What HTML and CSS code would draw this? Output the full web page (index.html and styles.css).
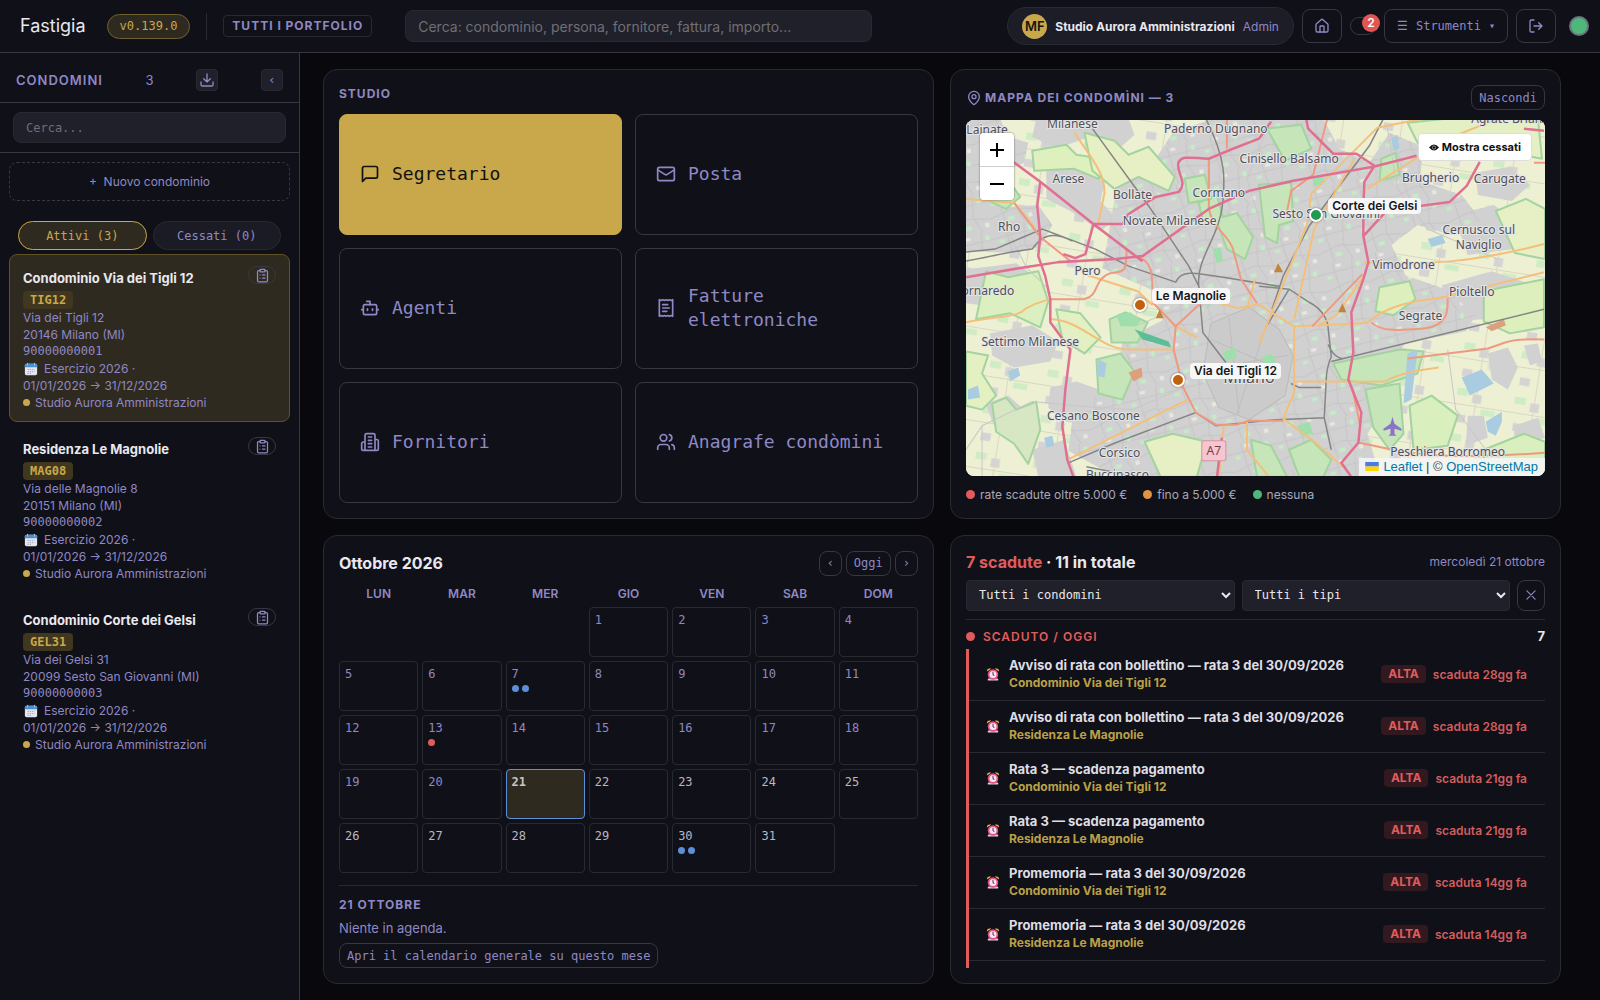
FILE: index.html
```
<!DOCTYPE html>
<html lang="it">
<head>
<meta charset="utf-8">
<meta name="viewport" content="width=device-width, initial-scale=1">
<title>Fastigia</title>
<link rel="stylesheet" href="styles.css">
</head>
<body>
<svg class="defs" aria-hidden="true">
  <symbol id="i-download" viewBox="0 0 24 24"><path d="M12 3v12M7 10l5 5 5-5M3 15v4a2 2 0 0 0 2 2h14a2 2 0 0 0 2-2v-4"/></symbol>
  <symbol id="i-home" viewBox="0 0 24 24"><path d="M15 21v-8a1 1 0 0 0-1-1h-4a1 1 0 0 0-1 1v8"/><path d="M3 10a2 2 0 0 1 .7-1.5l7-6a2 2 0 0 1 2.6 0l7 6A2 2 0 0 1 21 10v9a2 2 0 0 1-2 2H5a2 2 0 0 1-2-2z"/></symbol>
  <symbol id="i-logout" viewBox="0 0 24 24"><path d="M9 21H5a2 2 0 0 1-2-2V5a2 2 0 0 1 2-2h4M16 17l5-5-5-5M21 12H9"/></symbol>
  <symbol id="i-clip" viewBox="0 0 24 24"><rect x="8" y="2" width="8" height="4" rx="1"/><path d="M16 4h2a2 2 0 0 1 2 2v14a2 2 0 0 1-2 2H6a2 2 0 0 1-2-2V6a2 2 0 0 1 2-2h2M12 11h4M12 16h4M8 11h.01M8 16h.01"/></symbol>
  <symbol id="i-chat" viewBox="0 0 24 24"><path d="M21 15a2 2 0 0 1-2 2H7l-4 4V5a2 2 0 0 1 2-2h14a2 2 0 0 1 2 2z"/></symbol>
  <symbol id="i-mail" viewBox="0 0 24 24"><rect x="2" y="4" width="20" height="16" rx="2"/><path d="m22 7-9 5.700a2 2 0 0 1-2 0L2 7"/></symbol>
  <symbol id="i-bot" viewBox="0 0 24 24"><path d="M12 8V4H8"/><rect x="4" y="8" width="16" height="12" rx="2"/><path d="M2 14h2M20 14h2M15 13v2M9 13v2"/></symbol>
  <symbol id="i-receipt" viewBox="0 0 24 24"><path d="M4 2v20l2-1 2 1 2-1 2 1 2-1 2 1 2-1 2 1V2l-2 1-2-1-2 1-2-1-2 1-2-1-2 1ZM14 8H8M16 12H8M13 16H8"/></symbol>
  <symbol id="i-building" viewBox="0 0 24 24"><path d="M6 22V4a2 2 0 0 1 2-2h8a2 2 0 0 1 2 2v18ZM6 12H4a2 2 0 0 0-2 2v6a2 2 0 0 0 2 2h2M18 9h2a2 2 0 0 1 2 2v9a2 2 0 0 1-2 2h-2M10 6h4M10 10h4M10 14h4M10 18h4"/></symbol>
  <symbol id="i-users" viewBox="0 0 24 24"><path d="M16 21v-2a4 4 0 0 0-4-4H6a4 4 0 0 0-4 4v2"/><circle cx="9" cy="7" r="4"/><path d="M22 21v-2a4 4 0 0 0-3-3.870M16 3.130a4 4 0 0 1 0 7.750"/></symbol>
  <symbol id="i-pin" viewBox="0 0 24 24"><path d="M20 10c0 5-5.500 10.200-7.400 11.800a1 1 0 0 1-1.200 0C9.500 20.200 4 15 4 10a8 8 0 0 1 16 0"/><circle cx="12" cy="10" r="3"/></symbol>
  <symbol id="i-x" viewBox="0 0 24 24"><path d="M19 5 5 19M5 5l14 14"/></symbol>
  <symbol id="i-cal" viewBox="0 0 16 16"><rect x="1" y="2" width="14" height="13" rx="2" fill="#e4e6f0"/><path d="M1 6V4a2 2 0 0 1 2-2h10a2 2 0 0 1 2 2v2z" fill="#4a90d0"/><path d="M4 1v3M12 1v3" stroke="#a8c8e8"/><path d="M4 8.500h8M4 11h8M4 13h5" stroke="#9aa0b8" stroke-dasharray="1.500 1"/></symbol>
  <symbol id="i-alarm" viewBox="0 0 16 16"><path d="M1 5c0-3 2-4 5-3zM15 5c0-3-2-4-5-3z" fill="#e9b44c"/><rect x="2" y="13" width="12" height="2.500" rx="1" fill="#e8c9e0"/><circle cx="8" cy="8.500" r="6" fill="#e8507f"/><circle cx="8" cy="8.500" r="4" fill="#f6e6f2"/><path d="M8 5.500v3l1.500 1.500" stroke="#54405c" stroke-width="1.200" fill="none"/></symbol>
</svg>

<div class="app">
<header class="topbar">
  <div class="brand">Fastigia</div>
  <span class="version">v0.139.0</span>
  <span class="divider"></span>
  <span class="portfolio">TUTTI I PORTFOLIO</span>
  <input class="search" type="search" aria-label="Cerca" placeholder="Cerca: condominio, persona, fornitore, fattura, importo...">
  <div class="actions">
    <div class="user"><span class="avatar">MF</span><strong>Studio Aurora Amministrazioni</strong><span>Admin</span></div>
    <button class="btn tool" aria-label="Home"><svg class="ico"><use href="#i-home"/></svg></button>
    <button class="toggle" aria-label="Notifiche"><span class="count">2</span></button>
    <button class="btn menu"><span>☰</span> Strumenti <small>▾</small></button>
    <button class="btn tool" aria-label="Esci"><svg class="ico"><use href="#i-logout"/></svg></button>
    <span class="status"></span>
  </div>
</header>

<div class="body">
<aside class="side">
  <div class="side-head">
    <h2>CONDOMINI</h2><span class="n">3</span>
    <button class="sq" aria-label="Esporta"><svg class="ico"><use href="#i-download"/></svg></button>
    <button class="sq" aria-label="Comprimi">‹</button>
  </div>
  <div class="side-search"><input type="text" aria-label="Cerca condominio" placeholder="Cerca..."></div>
  <div class="side-list">
    <button class="new">+&nbsp; Nuovo condominio</button>
    <div class="tabs"><button class="tab on">Attivi (3)</button><button class="tab">Cessati (0)</button></div>
    <article class="condo on">
      <div class="condo-top"><h3>Condominio Via dei Tigli 12</h3><button class="clip" aria-label="Scheda"><svg class="ico"><use href="#i-clip"/></svg></button></div>
      <span class="code">TIG12</span>
      <p>Via dei Tigli 12</p><p>20146 Milano (MI)</p><p class="mono">90000000001</p>
      <p class="year"><svg class="emo"><use href="#i-cal"/></svg> Esercizio 2026 ·</p><p>01/01/2026 → 31/12/2026</p>
      <p class="owner"><i></i>Studio Aurora Amministrazioni</p>
    </article>
    <article class="condo">
      <div class="condo-top"><h3>Residenza Le Magnolie</h3><button class="clip" aria-label="Scheda"><svg class="ico"><use href="#i-clip"/></svg></button></div>
      <span class="code">MAG08</span>
      <p>Via delle Magnolie 8</p><p>20151 Milano (MI)</p><p class="mono">90000000002</p>
      <p class="year"><svg class="emo"><use href="#i-cal"/></svg> Esercizio 2026 ·</p><p>01/01/2026 → 31/12/2026</p>
      <p class="owner"><i></i>Studio Aurora Amministrazioni</p>
    </article>
    <article class="condo">
      <div class="condo-top"><h3>Condominio Corte dei Gelsi</h3><button class="clip" aria-label="Scheda"><svg class="ico"><use href="#i-clip"/></svg></button></div>
      <span class="code">GEL31</span>
      <p>Via dei Gelsi 31</p><p>20099 Sesto San Giovanni (MI)</p><p class="mono">90000000003</p>
      <p class="year"><svg class="emo"><use href="#i-cal"/></svg> Esercizio 2026 ·</p><p>01/01/2026 → 31/12/2026</p>
      <p class="owner"><i></i>Studio Aurora Amministrazioni</p>
    </article>
  </div>
</aside>

<main class="main">
  <section class="panel studio">
    <h2 class="label">STUDIO</h2>
    <div class="tiles">
      <button class="tile on"><svg class="ico"><use href="#i-chat"/></svg>Segretario</button>
      <button class="tile"><svg class="ico"><use href="#i-mail"/></svg>Posta</button>
      <button class="tile"><svg class="ico"><use href="#i-bot"/></svg>Agenti</button>
      <button class="tile"><svg class="ico"><use href="#i-receipt"/></svg>Fatture elettroniche</button>
      <button class="tile"><svg class="ico"><use href="#i-building"/></svg>Fornitori</button>
      <button class="tile"><svg class="ico"><use href="#i-users"/></svg>Anagrafe condòmini</button>
    </div>
  </section>

  <section class="panel mapbox">
    <div class="row"><h2 class="label wide"><svg class="ico"><use href="#i-pin"/></svg>MAPPA DEI CONDOMÌNI — 3</h2><button class="btn sm">Nascondi</button></div>
    <div class="map">
      <svg class="tiles-bg" viewBox="0 0 577 357" preserveAspectRatio="xMidYMid slice" aria-hidden="true">
        <defs>
          <pattern id="streets" width="44" height="38" patternUnits="userSpaceOnUse" patternTransform="rotate(-14)">
            <path d="M0 9h44M0 27l22-5 22 5M11 0l3 38M31 0l-4 22 6 16" fill="none" stroke="#c6c5c6" stroke-width="1"/>
            <path d="M3 12h5v3H3zM17 29h6v4h-6zM34 4h4v5h-4z" fill="#c4ecc6"/>
            <path d="M37 30h4v4h-4zM14 2h5v3h-5z" fill="#e8e8df"/>
          </pattern>
          <pattern id="fields" width="58" height="46" patternUnits="userSpaceOnUse" patternTransform="rotate(9)">
            <path d="M4 4h11v7H4zM30 22h14v6H30z" fill="#cfecc4"/><path d="M20 8h9v9h-9zM6 30h10v8H6z" fill="#d5d3d3"/><path d="M0 20h58M24 0v46" stroke="#d9d6c4" fill="none"/>
          </pattern>
        </defs>
        <rect width="577" height="357" fill="#eef0d4"/>
        <rect width="577" height="357" fill="url(#fields)"/>
        <g fill="#d2d1d2">
          <path d="M0 0h34l8 18 20 6-4 20-22 10-8 22 14 12 30-2 14 20-12 22-30 6-44-2z"/>
          <path d="M70 0h92l6 16-20 18-30-14-28 10-24-12zM80 52l36-8 22 20-4 18 16 18-16 12-30-20-24-12z"/>
          <path d="M0 150l50-6 20 14-12 22-26 8-32-4zM24 214l42-8 26 16-8 20-36 6-22-12zM20 284l22-8 16 14 4 24-20 6-16-18zM66 330l32-10 12 37H72z"/>
          <path d="M150 70l30-16 26-40 40-14h110l16 30 30 14 20-30 34 14-4 34 42 14 20 26-30 14-34-10-26 20 14 30 40 14 30 26-10 16-60 12-24 30 6 30-20 30 12 40-6 23H232l-10-30-40 14-40-8-40-22 4-30 24-26 20-18 6-36 40-20-10-30-50-22z"/>
          <path d="M486 96l40-10 26 20-6 24-46 6zM474 166l50-14 36 12 16 20-30 14-60 4zM508 54l34-6 20 18-18 16-34-6zM520 234l20-6 10 20-10 22-16-10zM556 226l14-2 4 18-12 4zM500 296h16l4 22-22 8zM546 306l24-8 7 20-30 10zM360 300l30 12 20 44h-50z"/>
          <path d="M84 268l26-6 34 12 24 18-22 16-46-6-18-14z"/>
        </g>
        <path d="M0 0h34l8 18 20 6-4 20-22 10-8 22 14 12 30-2 14 20-12 22-30 6-44-2zM150 70l30-16 26-40 40-14h110l16 30 30 14 20-30 34 14-4 34 42 14 20 26-30 14-34-10-26 20 14 30 40 14 30 26-10 16-60 12-24 30 6 30-20 30 12 40-6 23H232l-10-30-40 14-40-8-40-22 4-30 24-26 20-18 6-36 40-20-10-30-50-22z" fill="url(#streets)"/>
        <path d="M244 204l38-16 30 22 14 26-8 40-36 24-30-12-16-34z" fill="#cccbcc" stroke="#bbb"/>
        <path d="M244 220l70 30M262 198l10 96M300 204l-30 90M236 250l84-14" stroke="#bebdbe" fill="none"/>
        <g fill="#c6e6ba" stroke="#a3d39f" stroke-width="2" stroke-linejoin="round">
          <path d="M66 32l34-6 10 10 26 4-4 20-24-10-40 2z" fill="#dff0bf"/>
          <path d="M118 14l30 8 14 14 20-8 26 30-6 14-30-14-24 12-22-18z" fill="#e6f0c4"/>
          <path d="M232 84l18-8 6 22 14-4 16 24-8 22-18-10-8-22-16-6zM218 60l20-4 6 24-22 4z"/>
          <path d="M292 66l32-2 2 38-14 4-2 18-12-6z"/>
          <path d="M300 10l34-4 10 24-26 12zM20 62l20-4 14 20-14 12-22-10z"/>
          <path d="M143 200l16-7 22 10-10 20-26 0z"/><path d="M20 152l22 6 30-6 10 30-8 26-30-14-34 6z" fill="#dcefc0"/>
          <path d="M130 240l24-6 14 18-12 28-24-6z"/><path d="M90 190l24 4 20 24-16 16-22-14zM0 232l22 4-6 18 14 22-14 14-16-4z" fill="#e2f0c2"/>
          <path d="M26 284l14-6 10 12 20-8 4 28-12 34-14-20-18-12z" fill="#d7e6c3"/>
          <path d="M178 322l28-8 34 8-10 35h-36z" fill="#e6f0c4"/><path d="M284 320l20 6 16 31h-30zM322 330l22-10 20 20-8 17h-24z"/>
          <path d="M366 244l66-14 24 2-6 22-36 12-40-6z"/><path d="M398 270l34-6 4 50-14 16-16-22z"/>
          <path d="M412 168l30-6 6 18-22 16-18-4zM516 172l60-12v48l-34 6-26-12z" fill="#dcefbd"/>
          <path d="M440 4l40-4h90l4 40-30-6-20-18-44 12-30-4z" fill="#e4f0c4"/><path d="M414 40l14-6 4 22-20 6z"/>
          <path d="M442 286l22-10 26 20-10 30-34 4zM516 330l40-16 21 8v30l-60 0z" fill="#d9efbd"/><path d="M528 92l30-12 19 10v50l-30-6z" fill="#e6f0c4"/>
        </g>
        <g fill="#9fdfad"><path d="M150 196l14-3 10 8-4 6-16 0z"/><path d="M168 210l34 12 2 6-28-8z" fill="#5fbd95"/><path d="M256 232l12-4 2 10-12 4zM346 60l10-4 2 8-12 4zM236 176l12 4-6 8z"/><path d="M294 238l10-4 6 10-8 8zM330 306l12-4 4 12-12 2zM246 130l8-2 2 14-6 2z"/></g>
        <g fill="#a9cce0"><path d="M132 240l8 4-2 14-8-2zM42 252l10-4 2 8-10 6zM2 270l10-4 2 12-12 2zM78 318l8-2 2 10-8 2zM494 258l20-8 12 14-24 12zM518 302l16-10 0 10-6 14-8-4zM440 234l10-4-6 50-8 4zM460 120l14-4 4 8-14 4zM424 20l6-4 2 14-6 2zM500 18l10 0 0 8-10-2z"/></g>
        <g fill="#dda07c"><path d="M162 253l13-5 1 9-9 5zM518 208l18-8 2 6-14 6z"/></g>
        <g fill="none" stroke="#c9c7c8"><path d="M0 330l16-24 50-24 40 4 60 4 46-20M16 306v51M40 108l20 40 20 20M420 10l10 60 30 40 70 30M480 230l8 60 30 40M300 10l-20 50 30 100M250 150l-40 40-40 16"/></g>
        <g fill="none" stroke="#858585" stroke-width="1.500"><path d="M126 10L182 87 222 147 232 167 236 213 259 243M0 133l29-3 47-20 53 20 33 17 47 16c8-16 20-8 103 4M0 142c50-10 50-10 66-12 10-14 20-18 40-8M416 0L402 27 342 107 316 157 305 190M239 0c20 40 20 60 16 90s-26 50-23 77M292 167l30 3 20 13c16 8 19 22 19 27l3 27c-4 10-5 20-5 23l-2 38 7 32M364 242L576 190M322 170l-22 36M361 225c4 10 10 14 14 14M102 343l47-20 80-30 20 13 60-6 48-2M354 268h-22l-8-4M170 357l-50-10"/></g>
        <g fill="none" stroke="#f3c07c" stroke-width="2"><path d="M0 80l48 4 20 24M108 14c20 30 30 40 30 60l-6 30M0 203c40-8 50-4 60-14 14-8 30-10 24-9M84 200c30 0 50 30 77 30h46M121 156l50 16 15 14M101 340l60-30 62-31M186 183l23 24 21 11M327 207v66l-11 26M327 207l-36-22-20 4-28-8M327 207c40-2 66-2 73-4 30-24 60-20 88-28l88-22M292 225l48-120 4-30 66-66 50-10M396 143c60 4 110 0 180-18M327 262h90c20-10 30-10 54-14M316 299l30 22 30 26M288 160l-8 30M327 200l20-90 40-70M350 207l20-12 28-40M280 300v30l22 27M257 305l-5 52M530 0l-50 20-80 50"/></g>
        <g fill="none" stroke="#ee9a80" stroke-width="2"><path d="M84 180h34c16-4 8-20 26-26 14-2 16 0 16-24M48 84l26 34 30 24M169 137c18 4 17 20 17 46l23 24-2 23 9 37 13 26 20 12h20l13-4 34 0M209 207l27-25M242 40l0 50c4 20 20 26 24 40l8 30 16 24M345 207l50-52M404 203c10 10 30 8 54 6 24-4 22-20 22-30M440 239l80-10c20-6 20-10 56-9M381 260c6 10 10 40 12 46M391 323c30 4 50 20 186 10M360 0l-14 56-22 16-4 20M566 44h11M260 0v30"/></g>
        <g fill="none" stroke="#e07090" stroke-width="2.500" stroke-linejoin="round"><path d="M47 43L74 63 127 105 169 137 176 142M74 63l-3 24 3 30-2 20 7 20 5 23v23l20 27-5 40-3 37 5 33 6 17M0 158l59-10 33-5 57-3 27-3 66-47 40-18 44-10 80-14 43-11M127 105l-8 30-10 4-12-4M127 105l29 0 6-10 27-17 23-5c10-10-4-20 0-30 4-6 10-4 30-3l24-10 26-10 12-17M339 0l2 10 25 25h23l18 12-10 16-1 24v30l5 26-5 17-12 33 2 40-5 27 13 33-3 30-17 20 10 14M512 43l-13 24-17 16-30 4-32 4-24 26M576 12l-20-2M255 318l-5 40"/></g>
        <g fill="#c2843c"><path d="M193 190l4 9h-8zM375 184l4 9h-8zM311 144l5 9h-9z"/></g>
        <path d="M425 297l2 7 7 5v2l-7-2v5l2 2h-8l2-2v-5l-7 2v-2l7-5z" fill="#8b74c8"/>
        <rect x="235" y="321" width="24" height="20" rx="2" fill="#f5c6d0" stroke="#d692a2"/>
        <g class="towns">
          <text x="21" y="15">Lainate</text><text x="106" y="9">Milanese</text><text x="249" y="14">Paderno Dugnano</text><text x="322" y="44">Cinisello Balsamo</text>
          <text x="102" y="64">Arese</text><text x="166" y="80">Bollate</text><text x="252" y="78">Cormano</text><text x="203" y="106">Novate Milanese</text><text x="43" y="112">Rho</text>
          <text x="121" y="156">Pero</text><text x="18" y="176">Cornaredo</text><text x="64" y="227">Settimo Milanese</text><text x="127" y="300">Cesano Boscone</text><text x="153" y="337">Corsico</text><text x="151" y="359">Buccinasco</text>
          <text x="463" y="63">Brugherio</text><text x="532" y="64">Carugate</text><text x="511" y="115">Cernusco sul</text><text x="511" y="130">Naviglio</text><text x="436" y="150">Vimodrone</text><text x="504" y="177">Pioltello</text><text x="453" y="201">Segrate</text>
          <text x="480" y="336">Peschiera Borromeo</text><text x="359" y="99">Sesto San Giovanni</text><text x="545" y="4">Agrate Brianza</text><text x="247" y="335" class="road">A7</text><text x="282" y="263" class="city">Milano</text>
        </g>
      </svg>
      <div class="pin amber" style="left:30.0%;top:52.1%"><span>Le Magnolie</span></div>
      <div class="pin amber" style="left:36.6%;top:73.1%"><span>Via dei Tigli 12</span></div>
      <div class="pin green" style="left:60.5%;top:26.8%"><span>Corte dei Gelsi</span></div>
      <div class="zoom"><button aria-label="Ingrandisci"><svg viewBox="0 0 14 14"><path d="M0 7h14M7 0v14"/></svg></button><button aria-label="Riduci"><svg viewBox="0 0 14 14"><path d="M0 7h14"/></svg></button></div>
      <button class="closed"><svg viewBox="0 0 12 8"><path d="M0 4q6-7 12 0q-6 7-12 0" fill="#111"/><circle cx="6" cy="4" r="2" fill="none" stroke="#fff" stroke-width=".6"/></svg>Mostra cessati</button>
      <div class="credit"><svg viewBox="0 0 12 8"><path fill="#4c7be1" d="M0 0h12v4H0z"/><path fill="#ffd500" d="M0 4h12v4H0z"/></svg><a href="#">Leaflet</a> | © <a href="#">OpenStreetMap</a></div>
    </div>
    <div class="legend"><span><i class="red"></i>rate scadute oltre 5.000 €</span><span><i class="orange"></i>fino a 5.000 €</span><span><i class="green"></i>nessuna</span></div>
  </section>

  <section class="panel cal">
    <div class="row cal-head"><h2 class="title">Ottobre 2026</h2><div class="nav"><button class="btn sm" aria-label="Mese precedente">‹</button><button class="btn sm">Oggi</button><button class="btn sm" aria-label="Mese successivo">›</button></div></div>
    <table class="month">
      <thead><tr><th>LUN</th><th>MAR</th><th>MER</th><th>GIO</th><th>VEN</th><th>SAB</th><th>DOM</th></tr></thead>
      <tbody>
        <tr><td class="off"></td><td class="off"></td><td class="off"></td><td>1</td><td>2</td><td>3</td><td>4</td></tr>
        <tr><td>5</td><td>6</td><td>7<span class="dots"><i></i><i></i></span></td><td>8</td><td>9</td><td>10</td><td>11</td></tr>
        <tr><td>12</td><td>13<span class="dots"><i class="red"></i></span></td><td>14</td><td>15</td><td>16</td><td>17</td><td>18</td></tr>
        <tr><td>19</td><td>20</td><td class="today">21</td><td class="f">22</td><td class="f">23</td><td class="f">24</td><td class="f">25</td></tr>
        <tr><td class="f">26</td><td class="f">27</td><td class="f">28</td><td class="f">29</td><td class="f">30<span class="dots"><i></i><i></i></span></td><td class="f">31</td><td class="off"></td></tr>
      </tbody>
    </table>
    <div class="agenda"><h3 class="label">21 OTTOBRE</h3><p>Niente in agenda.</p><button class="btn sm">Apri il calendario generale su questo mese</button></div>
  </section>

  <section class="panel due">
    <div class="row due-head"><h2 class="title"><em>7 scadute</em> · 11 in totale</h2><span>mercoledì 21 ottobre</span></div>
    <div class="filters">
      <select aria-label="Condominio"><option>Tutti i condomini</option></select>
      <select aria-label="Tipo"><option>Tutti i tipi</option></select>
      <button class="btn" aria-label="Azzera filtri"><svg class="ico"><use href="#i-x"/></svg></button>
    </div>
    <div class="row group"><h3><i></i>SCADUTO / OGGI</h3><b>7</b></div>
    <ul class="list">
      <li><svg class="emo"><use href="#i-alarm"/></svg><div><strong>Avviso di rata con bollettino — rata 3 del 30/09/2026</strong><span>Condominio Via dei Tigli 12</span></div><mark>ALTA</mark><small>scaduta 28gg fa</small></li>
      <li><svg class="emo"><use href="#i-alarm"/></svg><div><strong>Avviso di rata con bollettino — rata 3 del 30/09/2026</strong><span>Residenza Le Magnolie</span></div><mark>ALTA</mark><small>scaduta 28gg fa</small></li>
      <li><svg class="emo"><use href="#i-alarm"/></svg><div><strong>Rata 3 — scadenza pagamento</strong><span>Condominio Via dei Tigli 12</span></div><mark>ALTA</mark><small>scaduta 21gg fa</small></li>
      <li><svg class="emo"><use href="#i-alarm"/></svg><div><strong>Rata 3 — scadenza pagamento</strong><span>Residenza Le Magnolie</span></div><mark>ALTA</mark><small>scaduta 21gg fa</small></li>
      <li><svg class="emo"><use href="#i-alarm"/></svg><div><strong>Promemoria — rata 3 del 30/09/2026</strong><span>Condominio Via dei Tigli 12</span></div><mark>ALTA</mark><small>scaduta 14gg fa</small></li>
      <li><svg class="emo"><use href="#i-alarm"/></svg><div><strong>Promemoria — rata 3 del 30/09/2026</strong><span>Residenza Le Magnolie</span></div><mark>ALTA</mark><small>scaduta 14gg fa</small></li>
    </ul>
  </section>
</main>
</div>
</div>
</body>
</html>
```
FILE: styles.css
```
:root {
  color-scheme: dark;
  --bg: #08080d;
  --panel: #101018;
  --field: #20202a;
  --line: #292a31;
  --line2: #363741;
  --muted: #8f88c4;
  --text: #e9e8ee;
  --gold: #c8a84b;
  --goldbg: #2f2a20;
  --red: #e05c5c;
  --blue: #5b8fd9;
  --green: #4db87a;
  --mono: "DejaVu Sans Mono", "Liberation Mono", monospace;
}
* { box-sizing: border-box; }
body { margin: 0; background: var(--bg); color: var(--text); font: 13px/17px Inter, "Liberation Sans", sans-serif; }
h2, h3, p, ul { margin: 0; padding: 0; }
button, input, select { font: 12px/16px var(--mono); color: var(--muted); }
button { cursor: pointer; }
.defs { display: none; }
.ico { width: 16px; height: 16px; flex: none; display: block; fill: none; stroke: currentColor; stroke-width: 2; stroke-linecap: round; stroke-linejoin: round; }
.emo { width: 14px; height: 14px; flex: none; }

.app { min-height: 100vh; display: flex; flex-direction: column; }
.topbar { height: 53px; flex: none; display: flex; align-items: center; padding: 0 11px 0 20px; background: var(--panel); border-bottom: 1px solid var(--line2); }
.brand { font-size: 18px; line-height: 24px; margin-right: 21px; }
.version { height: 25px; padding: 0 12px; border: 1px solid #6f602f; border-radius: 13px; background: var(--goldbg); color: var(--gold); font: 12px/23px var(--mono); }
.divider { width: 1px; height: 27px; margin: 0 16px; background: var(--line); }
.portfolio { height: 22px; padding: 0 8px; border: 1px solid var(--line); border-radius: 4px; color: var(--muted); font-size: 12px; font-weight: 700; line-height: 20px; letter-spacing: 1px; }
.search { width: 467px; height: 32px; margin-left: 33px; padding: 0 12px; border: 1px solid var(--line); border-radius: 8px; background: var(--field); font: 14px/18px Inter, sans-serif; }
.actions { display: flex; align-items: center; gap: 8px; margin-left: auto; }
.user { height: 38px; display: flex; align-items: center; gap: 8px; padding: 0 14px; border: 1px solid var(--line); border-radius: 19px; background: #1d1d27; color: var(--muted); font-size: 12px; }
.user strong { color: var(--text); font-weight: 700; }
.avatar { width: 25px; height: 25px; border-radius: 50%; background: var(--gold); color: #16140c; font-size: 13px; font-weight: 600; line-height: 25px; text-align: center; }
.btn { display: flex; align-items: center; justify-content: center; padding: 0; border: 1px solid var(--line2); border-radius: 8px; background: transparent; }
.btn.tool { width: 40px; height: 34px; }
.btn.menu { height: 34px; padding: 0 12px; gap: 8px; }
.btn.menu small { font-size: 10px; }
.btn.sm { height: 25px; padding: 0 7px; }
.toggle { position: relative; width: 26px; height: 18px; padding: 0; border: 1px solid var(--line2); border-radius: 9px; background: transparent; }
.count { position: absolute; right: -5px; top: -4px; width: 18px; height: 18px; border-radius: 50%; background: #e25555; color: #fff; font: 600 12px/18px Inter, sans-serif; }
.status { width: 20px; height: 20px; margin-left: 5px; border: 2px solid #6b7280; border-radius: 50%; background: var(--green); }

.body { flex: 1; display: grid; grid-template-columns: 300px minmax(0, 1fr); }
.side { background: var(--panel); border-right: 1px solid var(--line2); color: var(--muted); }
.side-head { height: 50px; display: flex; align-items: center; justify-content: space-between; padding: 5px 16px 0 16px; border-bottom: 1px solid var(--line2); }
.side-head h2 { font-size: 13px; font-weight: 600; letter-spacing: 1px; }
.sq { width: 22px; height: 22px; padding: 0; display: grid; place-items: center; border: 1px solid var(--line); border-radius: 4px; background: var(--field); }
.side-search { padding: 9px 13px; border-bottom: 1px solid var(--line2); }
.side-search input { display: block; width: 100%; height: 31px; padding: 0 12px; border: 1px solid var(--line); border-radius: 8px; background: var(--field); }
input::placeholder { color: #6f6f75; opacity: 1; }
.side-list { padding: 9px 9px 0; }
.new { display: block; width: 100%; height: 39px; border: 1px dashed var(--line2); border-radius: 8px; background: transparent; font: 12px/17px Inter, sans-serif; }
.tabs { display: grid; grid-template-columns: 1fr 1fr; gap: 6px; padding: 20px 9px 4px; }
.tab { height: 29px; padding: 0; border: 1px solid var(--line); border-radius: 15px; background: #1b1b25; }
.tab.on { border-color: var(--gold); background: var(--goldbg); color: var(--gold); }
.condo { height: 168px; margin-bottom: 3px; padding: 13px; border: 1px solid transparent; border-radius: 8px; font-size: 12px; }
.condo.on { background: var(--goldbg); border-color: #5f5229; }
.condo-top { display: flex; justify-content: space-between; }
.condo h3 { color: var(--text); font-size: 13px; font-weight: 700; line-height: 21px; }
.clip { width: 28px; height: 18px; margin-top: -2px; padding: 0; display: grid; place-items: center; border: 1px solid var(--line2); border-radius: 9px; background: transparent; }
.clip .ico { width: 15px; height: 15px; }
.code { display: block; width: max-content; margin-top: 2px; padding: 0 7px; border-radius: 4px; background: #41371f; color: var(--gold); font: bold 12px/18px var(--mono); }
.mono { font-size: 12px; font-family: var(--mono); }
.year { display: flex; gap: 6px; padding-left: 1px; align-items: center; }
.owner { display: flex; align-items: center; gap: 5px; }
.owner i { width: 7px; height: 7px; border-radius: 50%; background: var(--gold); }

.main { display: grid; grid-template-columns: repeat(2, minmax(0, 1fr)); grid-template-rows: 1fr 1fr; gap: 16px; padding: 16px 39px 16px 23px; }
.panel { display: flex; flex-direction: column; min-width: 0; padding: 15px; border: 1px solid var(--line); border-radius: 14px; background: var(--panel); }
.row { display: flex; align-items: center; justify-content: space-between; }
.label { color: var(--muted); font-size: 12px; font-weight: 700; line-height: 17px; letter-spacing: 1px; }
.title { font-size: 16px; font-weight: 700; line-height: 24px; }
.tiles { flex: 1; display: grid; grid-template-columns: 1fr 1fr; grid-template-rows: repeat(3, 1fr); gap: 13px; margin-top: 12px; }
.tile { display: flex; align-items: center; gap: 12px; padding: 0 20px; border: 1px solid var(--line2); border-radius: 8px; background: transparent; font-size: 18px; line-height: 24px; text-align: left; }
.tile.on { border-color: var(--gold); background: var(--gold); color: #111; }
.tile .ico { width: 20px; height: 20px; }

.wide { display: flex; align-items: center; gap: 3px; }
.map { position: relative; flex: 1; min-height: 300px; margin-top: 10px; overflow: hidden; border-radius: 8px; background: #d2d1d2; color: #111; }
.tiles-bg { position: absolute; width: 100%; height: 100%; }
.towns { font: 12px "Noto Sans", sans-serif; fill: #505058; text-anchor: middle; stroke: #e6e6e6; stroke-width: 2px; paint-order: stroke; }
.towns .city { font-size: 16px; }
.towns .road { font-size: 12px; fill: #7c3a4b; stroke: none; }
.pin { position: absolute; width: 14px; height: 14px; margin: -7px; border: 2px solid #fff; border-radius: 50%; box-shadow: 0 0 2px #555; }
.pin.amber { background: #c2610c; }
.pin.green { background: #219a52; }
.pin span { position: absolute; left: 17px; top: -12px; padding: 0 4px; border-radius: 4px; background: #f7f7f7; color: #16161a; font-size: 12px; font-weight: 600; line-height: 16px; white-space: nowrap; }
.zoom { position: absolute; left: 14px; top: 13px; width: 34px; border-radius: 4px; background: #fff; box-shadow: 0 0 2px #555; overflow: hidden; }
.zoom button { display: grid; place-items: center; width: 34px; height: 33px; padding: 0; border: 0; background: #fff; }
.zoom button + button { height: 34px; border-top: 1px solid #ccc; }
.zoom svg { width: 14px; height: 14px; stroke: #000; stroke-width: 2; }
.closed { position: absolute; right: 13px; top: 13px; height: 28px; padding: 0 10px; display: flex; align-items: center; gap: 3px; border: 1px solid #ddd; border-radius: 4px; background: #fff; color: #111; font: 700 11px/16px Inter, sans-serif; }
.closed svg { width: 10px; height: 7px; }
.credit { position: absolute; right: 0; bottom: 0; padding: 0 7px 0 6px; background: #f4f4f4e6; color: #444; font: 13px/18px "Liberation Sans", sans-serif; }
.credit svg { width: 14px; height: 9px; margin-right: 4px; }
.credit a { color: #0078a8; text-decoration: none; }
.legend { display: flex; gap: 16px; padding: 10px 0 0; color: #aaa8b8; font-size: 12px; }
.legend span { display: flex; align-items: center; gap: 5px; }
.legend i, .group i { width: 9px; height: 9px; border-radius: 50%; background: var(--red); }
.legend .orange { background: #e0923f; }
.legend .green { background: var(--green); }

.nav { display: flex; gap: 4px; }
.month { flex: 1; width: 100%; border-spacing: 0; display: grid; grid-template-rows: 18px 1fr; gap: 4px; margin-top: 9px; }
.month thead { display: block; }
.month tr { display: grid; grid-template-columns: repeat(7, 1fr); gap: 4px; }
.month tbody { display: grid; grid-template-rows: repeat(5, 1fr); gap: 4px; }
.month th { padding: 0; color: var(--muted); font-size: 12px; font-weight: 600; line-height: 18px; }
.month td { padding: 4px 5px; border: 1px solid var(--line); border-radius: 4px; color: var(--muted); font: 12px/16px var(--mono); }
.month td.f { color: #b9b8c2; }
.month td.off { border: 0; }
.month td.today { border-color: var(--blue); background: var(--goldbg); color: #c9c6c4; font-weight: bold; }
.dots { display: flex; gap: 3px; padding-top: 3px; }
.dots i { width: 7px; height: 7px; border-radius: 50%; background: var(--blue); }
.dots .red { background: var(--red); }
.agenda { margin-top: 12px; padding-top: 10px; border-top: 1px solid var(--line); color: var(--muted); }
.agenda p { margin: 6px 0; line-height: 18px; font-size: 13px; }

.due { padding-top: 14px; }
.due-head span { color: var(--muted); font-size: 12px; }
.title em { color: var(--red); font-style: normal; }
.filters { display: grid; grid-template-columns: 1fr 1fr 28px; gap: 7px; padding: 6px 0 8px; border-bottom: 1px solid var(--line); }
.filters select { height: 31px; min-width: 0; padding: 0 8px; border: 1px solid var(--line); border-radius: 4px; background: var(--field); color: var(--text); }
.filters .btn { height: 31px; }
.filters .ico { width: 14px; height: 14px; }
.group { padding: 8px 0 4px; }
.group h3 { display: flex; align-items: center; gap: 8px; color: var(--red); font-size: 12px; font-weight: 600; letter-spacing: 1px; }
.list { flex: 1; border-left: 3px solid var(--red); list-style: none; }
.list li { height: 52px; display: flex; align-items: center; padding: 0 18px 0 17px; border-bottom: 1px solid var(--line); }
.list div { flex: 1; min-width: 0; display: grid; padding-left: 9px; }
.list strong { font-size: 13px; font-weight: 700; color: #dedde3; }
.list div span { color: #bca047; font-size: 12px; font-weight: 700; }
.list mark { padding: 0 7px; border-radius: 4px; background: #32191f; color: var(--red); font-size: 12px; font-weight: 700; line-height: 18px; }
.list small { margin-left: 7px; color: #d45c5c; font-size: 12px; font-weight: 600; }
```
